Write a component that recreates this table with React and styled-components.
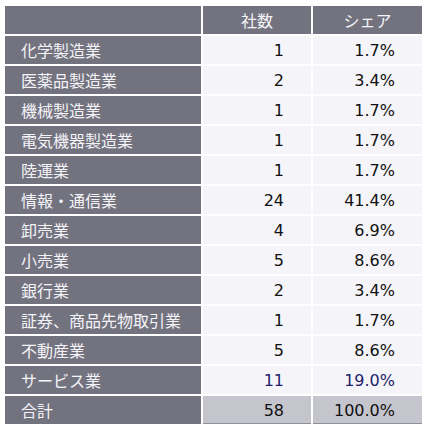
import styled, { createGlobalStyle } from "styled-components";

const GlobalStyle = createGlobalStyle`
    body {
        margin: 0;
        background: #ffffff;
        font-family: "DejaVu Sans", "Noto Sans CJK JP", sans-serif;
    }
`;

const rows = [
    { name: "化学製造業", count: 1, share: "1.7%" },
    { name: "医薬品製造業", count: 2, share: "3.4%" },
    { name: "機械製造業", count: 1, share: "1.7%" },
    { name: "電気機器製造業", count: 1, share: "1.7%" },
    { name: "陸運業", count: 1, share: "1.7%" },
    { name: "情報・通信業", count: 24, share: "41.4%" },
    { name: "卸売業", count: 4, share: "6.9%" },
    { name: "小売業", count: 5, share: "8.6%" },
    { name: "銀行業", count: 2, share: "3.4%" },
    { name: "証券、商品先物取引業", count: 1, share: "1.7%" },
    { name: "不動産業", count: 5, share: "8.6%" },
    { name: "サービス業", count: 11, share: "19.0%", accent: true },
];

export default function App(){
    return(
        <>
            <GlobalStyle />
            <Table>
                <thead>
                    <tr>
                        <HeadCell style={{width: "196px"}}></HeadCell>
                        <HeadCell style={{width: "108px"}}>社数</HeadCell>
                        <HeadCell style={{width: "109px"}}>シェア</HeadCell>
                    </tr>
                </thead>
                <tbody>
                    {rows.map((item) =>
                        <tr key={item.name}>
                            <Label>{item.name}</Label>
                            <Value accent={item.accent}>{item.count}</Value>
                            <Value accent={item.accent}>{item.share}</Value>
                        </tr>
                    )}
                    <tr>
                        <Label>合計</Label>
                        <Value total>58</Value>
                        <Value total>100.0%</Value>
                    </tr>
                </tbody>
            </Table>
        </>
    );
}

const Table = styled.table`
    border-collapse: separate;
    border-spacing: 2px;
    margin: 4px 0 0 3px;
    table-layout: fixed;
    font-size: 16px;
`;

const HeadCell = styled.th`
    height: 28px;
    padding: 0;
    background: #73727f;
    color: #f4f4f8;
    font-weight: 400;
    text-align: center;
`;

const Label = styled.td`
    height: 28px;
    padding: 0 0 0 16px;
    background: #73727f;
    color: #f4f4f8;
    white-space: nowrap;
`;

const Value = styled.td`
    height: 28px;
    padding: 0 27px 0 0;
    text-align: right;
    background: ${props => props.total ? "#c5c5cd" : "#f4f4f9"};
    box-shadow: ${props => props.total ? "inset 0 -1px 0 #8f8e99" : "none"};
    color: ${props => props.accent ? "#1f1f6b" : "#111111"};
`;
